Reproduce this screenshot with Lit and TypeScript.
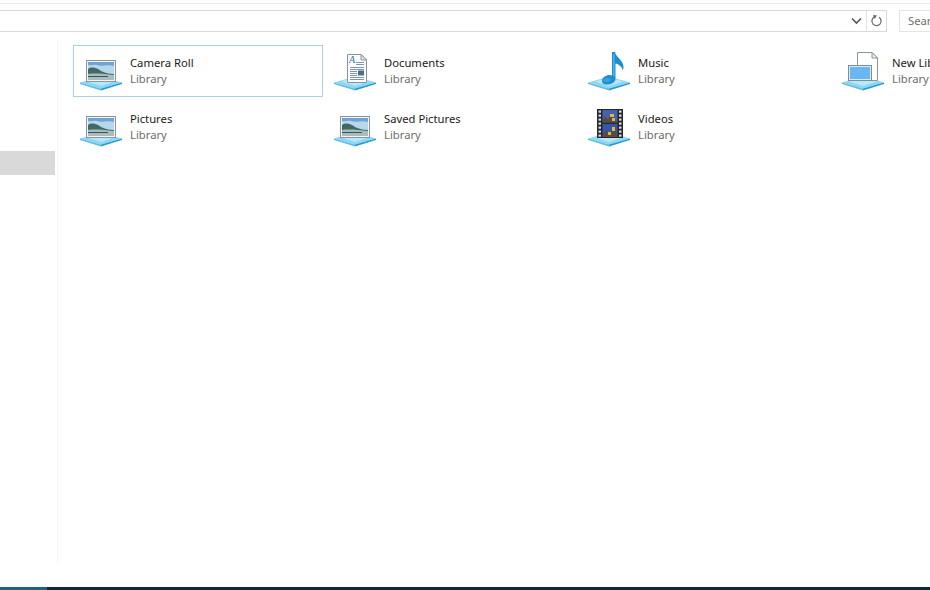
import { LitElement, html, css, svg } from "lit";
import { customElement } from "lit/decorators.js";

const platform = svg`
  <path d="M3 34.5 L24 28.5 L45 34.5 L24 40.5 Z" fill="#8ed6f1" />
  <path d="M3 34.5 L24 40.5 L24 42.5 L3 36 Z" fill="#5dbde3" />
  <path d="M45 34.5 L24 40.5 L24 42.5 L45 36 Z" fill="#2a9bcf" />
  <path d="M10 33.5 L24 29.5 L38 33.5 L24 38 Z" fill="#b9e8f8" />
`;

const photo = svg`
  ${platform}
  <rect x="9.5" y="12.5" width="29" height="21" fill="#f2f4f5" stroke="#8b9499" />
  <rect x="11" y="14" width="26" height="18" fill="#b9d6ea" />
  <path d="M11 14 H37 V18 C31 16 26 19 20 17 C17 16 14 18 11 17 Z" fill="#6fa4d2" />
  <path d="M11 21 C15 18 20 20 24 23 C28 25 32 26 37 26 V32 H11 Z" fill="#3f6a62" />
  <path d="M11 26 C18 25 28 26 37 27 V32 H11 Z" fill="#a8bcc0" />
  <path d="M11 28 H31 V29 H11 Z" fill="#3c5352" />
`;

const doc = svg`
  ${platform}
  <path d="M16.5 6.5 H30 L35.5 12 V34.5 H16.5 Z" fill="#fff" stroke="#8a9299" />
  <path d="M30 6.5 V12 H35.5 Z" fill="#dfe5ea" stroke="#8a9299" />
  <text x="18" y="15" font-family="Liberation Serif, serif" font-style="italic" font-size="10" fill="#2f6fb5">A</text>
  <path d="M25 14.5 H33 M25 16.5 H33 M19 19.5 H33 M19 21.5 H33 M19 23.5 H26 M19 25.5 H26 M19 27.5 H26 M19 29.5 H33 M19 31.5 H33" stroke="#7d97b3" stroke-width="1" />
  <rect x="27" y="22.5" width="6" height="5" fill="#4d6f86" />
`;

const music = svg`
  ${platform}
  <path d="M27 4 H30 C30.5 9 38.5 12 38.5 19 C38.5 20.5 38.2 21.5 37.8 22.5 C37 18.5 33.5 16 30.5 15.5 V31 C30.5 34.5 26 36.5 21.5 36.5 C18.5 36.5 17 35 17 33 C17 29.5 21 27 24.5 27 C25.5 27 26.5 27.2 27 27.5 Z" fill="#1b8fd2" />
  <path d="M28 6 H29.5 V28 H28 Z" fill="#4fb0e6" />
  <ellipse cx="22" cy="32" rx="3.5" ry="2" fill="#3f9fdc" />
`;

const holes = [0, 1, 2, 3, 4, 5, 6];

const video = svg`
  ${platform}
  <rect x="12" y="5" width="26" height="29" fill="#26262a" />
  ${holes.map(
    (i) => svg`
      <rect x="13.5" y=${6.5 + i * 4} width="2.5" height="2.2" fill="#d8dde0" />
      <rect x="34" y=${6.5 + i * 4} width="2.5" height="2.2" fill="#d8dde0" />
    `
  )}
  <rect x="17.5" y="6" width="15" height="12.5" fill="#4463ad" />
  <rect x="17.5" y="20" width="15" height="13" fill="#3557a8" />
  <path d="M17.5 18.5 L20 12 L23 16 L26 9 L29 13 L32.5 18.5 Z" fill="#5b4a3a" />
  <path d="M25 10 h4 v3 h-4 Z M27 14 h3 v3 h-3 Z" fill="#d9b94f" />
  <path d="M17.5 33 L21 26 L25 30 L29 22 L32.5 33 Z" fill="#5f4a38" />
  <path d="M27 23 h3 v4 h-3 Z M23 28 h3 v3 h-3 Z" fill="#d9b94f" />
`;

const newLib = svg`
  ${platform}
  <path d="M18.5 4.5 H33 L38.5 10 V32.5 H18.5 Z" fill="#fff" stroke="#8d9498" />
  <path d="M33 4.5 V10 H38.5 Z" fill="#e8ecef" stroke="#8d9498" />
  <rect x="9.5" y="17.5" width="23" height="15" fill="#dcebf5" stroke="#7f8c94" />
  <rect x="11" y="19" width="20" height="12" fill="#68b6f2" />
`;

type Lib = { name: string; icon: unknown; selected?: boolean };

const libs: Lib[] = [
  { name: "Camera Roll", icon: photo, selected: true },
  { name: "Documents", icon: doc },
  { name: "Music", icon: music },
  { name: "New Library", icon: newLib },
  { name: "Pictures", icon: photo },
  { name: "Saved Pictures", icon: photo },
  { name: "Videos", icon: video },
];

@customElement("app-root")
export class AppRoot extends LitElement {
  static styles = css`
    :host {
      display: flex;
      flex-direction: column;
      width: 930px;
      height: 590px;
      overflow: hidden;
      background: #fff;
      font-family: "Noto Sans", "Open Sans", sans-serif;
    }
    .strip {
      height: 10px;
      box-sizing: border-box;
      padding-top: 3px;
      flex: none;
    }
    .strip div {
      height: 1px;
      background: #ececec;
    }
    .toolbar {
      display: flex;
      flex: none;
      height: 22px;
    }
    .address {
      width: 887px;
      box-sizing: border-box;
      display: flex;
      justify-content: flex-end;
      border: 1px solid #dadada;
      border-left: none;
    }
    .chev {
      width: 20px;
      display: flex;
      align-items: center;
      justify-content: center;
    }
    .refresh {
      width: 19px;
      border-left: 1px solid #e2e2e2;
      display: flex;
      align-items: center;
      justify-content: center;
    }
    .search {
      margin-left: 12px;
      flex: 1;
      border: 1px solid #e4e4e4;
      border-right: none;
      padding-left: 8px;
      font-size: 11.25px;
      line-height: 19px;
      color: #6f6f6f;
      overflow: hidden;
      white-space: nowrap;
    }
    .main {
      flex: 1;
      display: flex;
      min-height: 0;
    }
    .nav {
      width: 58px;
      box-sizing: border-box;
      flex: none;
      margin: 8px 0 22px;
      padding-top: 111px;
      border-right: 1px solid #f6f6f6;
    }
    .nav div {
      width: 55px;
      height: 24px;
      background: #d9d9d9;
    }
    .grid {
      flex: none;
      display: grid;
      grid-template-columns: repeat(4, 250px);
      grid-auto-rows: 52px;
      gap: 4px;
      padding: 13px 0 0 15px;
    }
    .item {
      display: flex;
      box-sizing: border-box;
      border: 1px solid transparent;
      padding: 2px 0 0 3px;
    }
    .item.selected {
      border-color: #a9d0e0;
    }
    .item svg {
      flex: none;
      width: 48px;
      height: 48px;
    }
    .text {
      margin: 7px 0 0 5px;
      font-size: 11.25px;
      line-height: 16px;
      white-space: nowrap;
    }
    .name {
      color: #1a1a1a;
    }
    .kind {
      color: #6d6d6d;
    }
    .taskbar {
      flex: none;
      height: 3px;
      background: #0e2a33;
    }
    .taskbar div {
      width: 47px;
      height: 3px;
      background: #17667c;
    }
  `;

  render() {
    return html`
      <div class="strip"><div></div></div>
      <div class="toolbar">
        <div class="address">
          <div class="chev">
            <svg width="11" height="8" viewBox="0 0 11 8">
              <path d="M1 1.5 L5.5 6 L10 1.5" fill="none" stroke="#555" stroke-width="1.6" />
            </svg>
          </div>
          <div class="refresh">
            <svg width="13" height="14" viewBox="0 0 13 14">
              <path d="M4 3.2 A4.6 4.6 0 1 0 9 3.2" fill="none" stroke="#666" stroke-width="1.2" />
              <path d="M3 1 L7 1.5 L4.5 5 Z" fill="#666" />
            </svg>
          </div>
        </div>
        <div class="search">Search</div>
      </div>
      <div class="main">
        <div class="nav"><div></div></div>
        <div class="grid">
          ${libs.map(
            (l) => html`
              <div class="item ${l.selected ? "selected" : ""}">
                <svg viewBox="0 0 48 48">${l.icon}</svg>
                <div class="text">
                  <div class="name">${l.name}</div>
                  <div class="kind">Library</div>
                </div>
              </div>
            `
          )}
        </div>
      </div>
      <div class="taskbar"><div></div></div>
    `;
  }
}
